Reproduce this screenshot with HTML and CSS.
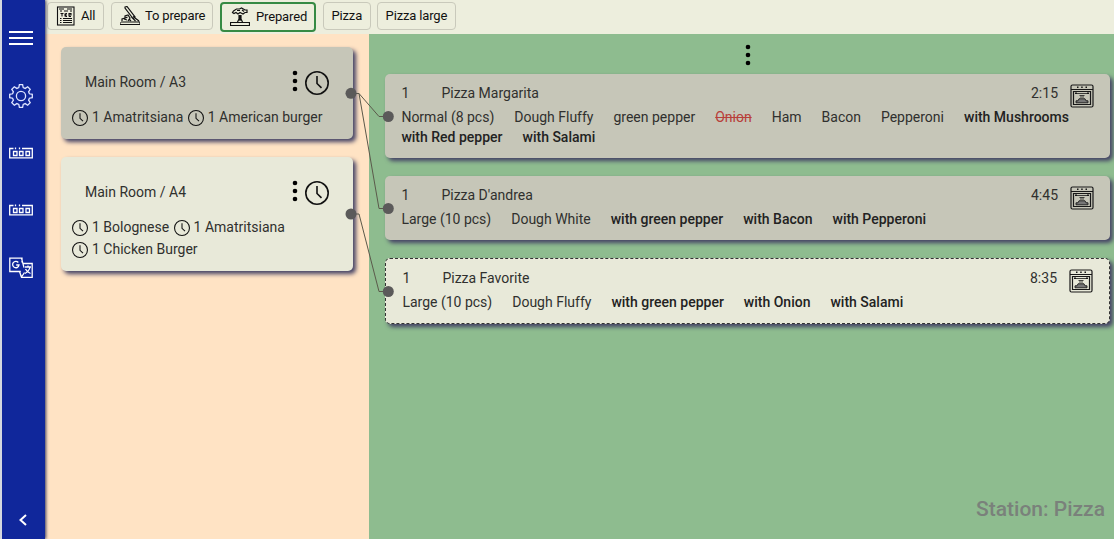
FILE: index.html
```html
<!DOCTYPE html>
<html lang="en">
<head>
<meta charset="utf-8">
<title>Station: Pizza</title>
<link rel="stylesheet" href="styles.css">
</head>
<body>
<svg width="0" height="0" class="defs">
  <symbol id="clock" viewBox="0 0 24 24"><circle cx="12" cy="12" r="11.2"/><path d="M12 5v7.5l4.5 4.3"/></symbol>
  <symbol id="dots" viewBox="0 0 6 22"><circle cx="3" cy="3" r="2.3"/><circle cx="3" cy="11" r="2.3"/><circle cx="3" cy="19" r="2.3"/></symbol>
  <symbol id="station" viewBox="0 0 24 12"><path d="M4.500 1.500H.7v9.300h22.600V1.500H13M4.500 4.500h3.500v4h-3.500zM10.500 4.500h3.500v4h-3.500zM17 4.500h3.500v4H17zM6.500 .5v1.700M10.500 .5v1.700"/></symbol>
  <symbol id="oven" viewBox="0 0 24 24">
    <rect x="1" y="1" width="22" height="22" rx="1.500"/>
    <path d="M1 5.500h22M3.500 7.500h17v13h-17z"/>
    <path d="M7 3.300h1.500M11.200 3.300h1.500M15.500 3.300H17M5 9.200h2M17 9.200h2" stroke-width="1.600"/>
    <path d="M6 9.500h12M9.500 11.500h5M10 13h4" stroke-width=".8"/>
    <path d="M9 14.800h6l1 2h2v2H6v-2h2z" fill="#777" stroke-width=".9"/>
  </symbol>
</svg>
<div class="app">
  <nav class="sidebar">
    <svg class="side-icon menu" viewBox="0 0 24 14"><path d="M0 1h24M0 7h24M0 13h24"/></svg>
    <svg class="side-icon gear" viewBox="0 0 24 24"><circle cx="12" cy="12" r="4.600"/><path d="M10.400 .7h3.200l.6 2.900 2 .8L18.700 2.800 21.200 5.300 19.600 7.800l.8 2 2.900.6v3.200l-2.900.6-.8 2 1.600 2.500-2.500 2.500-2.500-1.600-2 .8-.6 2.900h-3.200l-.6-2.900-2-.8-2.500 1.600-2.500-2.500 1.600-2.500-.8-2-2.900-.6v-3.200l2.900-.6.8-2L2.800 5.300 5.300 2.800 7.800 4.400l2-.8z"/></svg>
    <svg class="side-icon station first"><use href="#station"/></svg>
    <svg class="side-icon station"><use href="#station"/></svg>
    <svg class="side-icon translate" viewBox="0 0 24 22"><path d="M13 5.500V1.200H.8v13.300h11M13.500 6.500h9.700v13.800H12.500l-2-5.800M12.500 1.200l2.500 9.500M12.500 20l3-4.500M16 10h6M19 8.500V10M21 10c-.5 3-2.500 5-5 6.500M16.500 12c1 2 2.500 3.500 5 4.500"/><path d="M9.300 5.500A3.200 3.200 0 1 0 10 8H7.200"/></svg>
    <svg class="side-icon collapse" viewBox="0 0 8 12"><path d="M7 1 1.500 6 7 11"/></svg>
  </nav>
  <main class="main">
    <header class="filters">
      <button class="filter all"><svg class="pic" viewBox="0 0 20 20"><rect x="1.500" y="1" width="16.500" height="18"/><path d="M3 3h5M11 3h5M4 5h2M8 5h4M14 5h2"/><path d="M4.500 7.500h3M6 7.500v3M9 7.500v3M11 7.500h-1v3h1M13 10.500v-3h2v1.500h-2M15 10.500h-2M4 12.500h1.500M7 12.500h9M4 14.500h1.500M7 14.500h9M4 16.500h1.500M7 16.500h9"/></svg>All</button>
      <button class="filter prepare"><svg class="pic" viewBox="0 0 20 20"><path d="M0 16v2.500h20V16H1M5 1l2-.5 8 10.500-2 1.500L5 2zM11.500 11l4 4M13 10.500l6 4.500"/><path d="M2 15v-2l3-1v-2l3-1 2 3-2 3M4 13l3 1M7.500 11l-2 1M9 13l2 2"/></svg>To prepare</button>
      <button class="filter active"><svg class="pic" viewBox="0 0 20 20"><path d="M.5 15v3.500h19V15M.5 15.500h19"/><path d="M9 8v4l-1.500 3M11 8v4l1.500 3M10 8v6M3.500 4l3-2h3l2-1 3.500 2h2v2.500h-2l-2 1.500-3-1.500-2 1.500-2-1.500-2 1-1.500-1zM7 3.500h3M12 3l2 1.500"/></svg>Prepared</button>
      <button class="filter">Pizza</button>
      <button class="filter">Pizza large</button>
    </header>
    <div class="board">
      <section class="orders">
        <article class="card order done">
          <div class="order-head"><span class="room">Main Room / A3</span><svg class="dots"><use href="#dots"/></svg><svg class="clock big"><use href="#clock"/></svg></div>
          <div class="items"><span><svg class="clock"><use href="#clock"/></svg>1 Amatritsiana</span><span><svg class="clock"><use href="#clock"/></svg>1 American burger</span></div>
        </article>
        <article class="card order">
          <div class="order-head"><span class="room">Main Room / A4</span><svg class="dots"><use href="#dots"/></svg><svg class="clock big"><use href="#clock"/></svg></div>
          <div class="items"><span><svg class="clock"><use href="#clock"/></svg>1 Bolognese</span><span><svg class="clock"><use href="#clock"/></svg>1 Amatritsiana</span><span><svg class="clock"><use href="#clock"/></svg>1 Chicken Burger</span></div>
        </article>
      </section>
      <section class="dishes">
        <svg class="dots"><use href="#dots"/></svg>
        <article class="card dish done">
          <div class="dish-body">
            <div class="dish-head"><span class="qty">1</span><span class="name">Pizza Margarita</span><time>2:15</time></div>
            <div class="mods"><span>Normal (8 pcs)</span><span>Dough Fluffy</span><span>green pepper</span><del>Onion</del><span>Ham</span><span>Bacon</span><span>Pepperoni</span><b>with Mushrooms</b><b>with Red pepper</b><b>with Salami</b></div>
          </div>
          <svg class="oven"><use href="#oven"/></svg>
        </article>
        <article class="card dish done">
          <div class="dish-body">
            <div class="dish-head"><span class="qty">1</span><span class="name">Pizza D'andrea</span><time>4:45</time></div>
            <div class="mods"><span>Large (10 pcs)</span><span>Dough White</span><b>with green pepper</b><b>with Bacon</b><b>with Pepperoni</b></div>
          </div>
          <svg class="oven"><use href="#oven"/></svg>
        </article>
        <article class="card dish current">
          <div class="dish-body">
            <div class="dish-head"><span class="qty">1</span><span class="name">Pizza Favorite</span><time>8:35</time></div>
            <div class="mods"><span>Large (10 pcs)</span><span>Dough Fluffy</span><b>with green pepper</b><b>with Onion</b><b>with Salami</b></div>
          </div>
          <svg class="oven"><use href="#oven"/></svg>
        </article>
        <div class="station-name">Station: Pizza</div>
      </section>
    </div>
  </main>
  <svg class="links" viewBox="0 0 1114 539">
    <path d="M351 93.500h8l20 23h9M359 93.500l20 115h9M351 214h8l20 77.500h9"/>
    <circle cx="351" cy="93.300" r="5.500"/><circle cx="351" cy="214" r="5.500"/>
    <circle cx="388.300" cy="116.500" r="5.500"/><circle cx="388.300" cy="208.500" r="5.500"/><circle cx="388.300" cy="291.500" r="5.500"/>
  </svg>
</div>
</body>
</html>
```
FILE: styles.css
```css
* { box-sizing: border-box; }
body { margin: 0; font: 14px/20px Roboto, sans-serif; color: #30302e; overflow: hidden; }
.defs { position: absolute; }
svg { display: block; flex: none; fill: none; }
.app { display: flex; position: relative; width: 1114px; height: 539px; background: #ffe3c4; }

.sidebar { display: flex; flex: none; flex-direction: column; width: 45px; padding: 31px 0 13px 9px; background: #10279b; border-left: 2px solid #d4d7df; box-shadow: 1px 0 3px #3c3b58; z-index: 1; }
.side-icon { width: 24px; stroke: #fff; stroke-width: 1.3; overflow: visible; }
.sidebar .menu { height: 14px; margin-left: -2px; stroke-width: 2; }
.gear { height: 24px; margin: 39px 0 0 -2px; stroke: #dfe5ff; }
.station { height: 12px; margin: 45px 0 0 -2px; }
.station.first { margin-top: 39px; }
.translate { height: 22px; margin: 41px 0 0 -2px; }
.collapse { width: 8px; height: 12px; margin: auto 0 0 8px; stroke-width: 2; }

.main { flex: 1; display: flex; flex-direction: column; min-width: 0; }
.filters { display: flex; align-items: flex-start; gap: 7px; height: 34px; padding: 2px 0 0 2px; background: #edeedd; }
.filter { display: flex; align-items: center; height: 28px; padding: 0 7.5px; border: 1px solid #c9c9bb; border-radius: 4px; background: transparent; font: 13px/20px Roboto, sans-serif; letter-spacing: -.15px; color: #111; white-space: nowrap; }
.filter.all { width: 57px; padding: 0 8px; }
.filter.prepare { width: 102px; padding: 0 8px; }
.filter.active { width: 96px; height: 30px; border: 2px solid #368a44; padding: 0 8px; }
.filter:last-child { margin-left: -.5px; }
.pic { width: 20px; height: 20px; margin-right: 5px; stroke: #111; stroke-width: 1.200; }
.active .pic { margin-right: 6px; }
.all .pic { stroke-width: 1.100; }

.board { flex: 1; display: flex; }
.orders { display: flex; flex-direction: column; flex: 0 0 324px; gap: 18px; padding: 13px 16px; }
.card { border-radius: 5px; background: #e8e9d9; box-shadow: 3px 3px 4px #454365; }
.card.done { background: #c6c6b8; }
.order { padding: 11px; }
.order-head { display: flex; align-items: center; height: 48px; padding: 0 13px; }
.room { flex: 1; }
.dots { width: 6px; height: 22px; fill: #000; }
.order .dots { margin: -3px 7px 0 0; }
.clock { width: 16px; height: 16px; margin: 1px 4px 0 0; stroke: #111; stroke-width: 1.600; }
.clock.big { width: 24px; height: 24px; margin: 2px 0 0; }
.items { display: flex; flex-wrap: wrap; column-gap: 4.5px; margin-right: -8px; line-height: 22px; }
.items span { display: flex; align-items: center; }

.dishes { flex: 1; display: flex; flex-direction: column; gap: 18px; padding: 10px 4px 18px 16px; background: #8ebc8f; }
.dishes > .dots { align-self: center; margin-bottom: -10px; }
.dish { display: flex; padding: 9px 16px 11px 16.4px; }
.dish-body { flex: 1; min-width: 0; }
.dish-head { display: flex; margin-bottom: 4px; padding-right: 12px; }
.qty { width: 40px; }
.name { flex: 1; }
.mods { display: flex; flex-wrap: wrap; column-gap: 20px; margin-right: -8px; white-space: nowrap; }
.mods b { font-weight: 500; color: #222; }
.mods del { color: #b8403a; }
.oven { width: 24px; height: 24px; margin-top: 1px; stroke: #181818; stroke-width: 1.200; }
.current { border: 1px dashed #333; }
.station-name { margin: auto 5px 0 0; text-align: right; font-size: 21px; line-height: 24px; font-weight: 500; color: #7a817b; }

.links { position: absolute; inset: 0; width: 1114px; height: 539px; pointer-events: none; }
.links path { stroke: #5b594b; stroke-width: 1; }
.links circle { fill: #5b5a5a; }
```
